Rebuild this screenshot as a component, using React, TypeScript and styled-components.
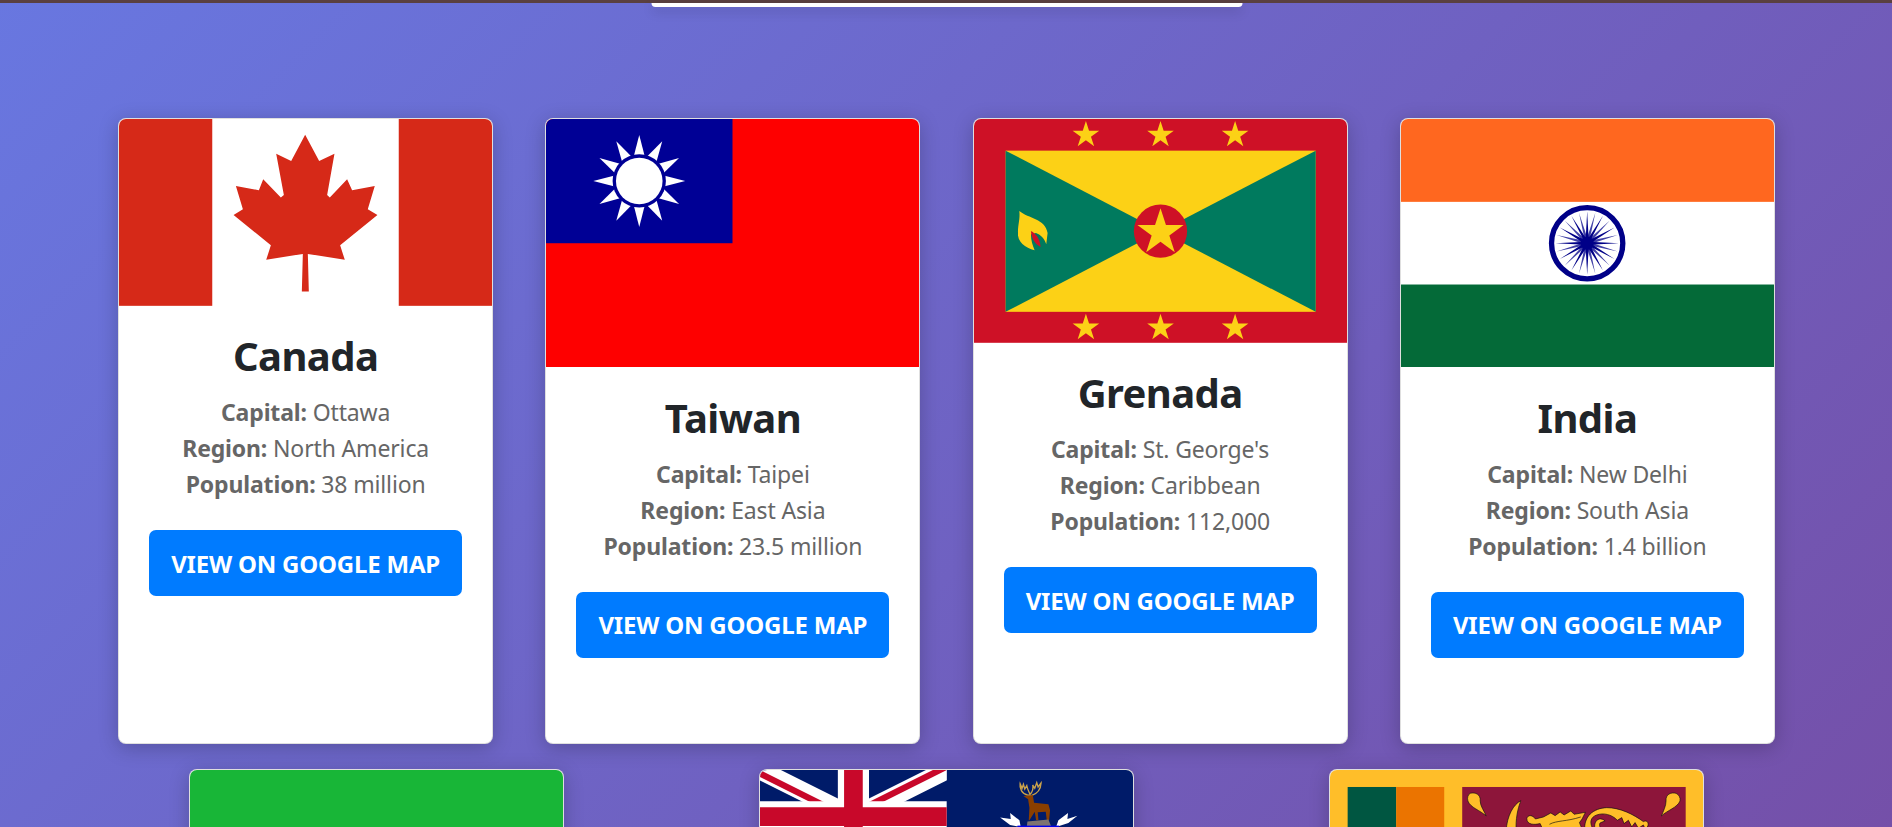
import React from 'react';
import styled, { createGlobalStyle } from 'styled-components';

const GlobalStyle = createGlobalStyle`
    html, body {
        margin: 0;
        height: 827px;
        overflow: hidden;
    }
    body {
        font-family: "Noto Sans", "Open Sans", sans-serif;
        background: linear-gradient(135deg, #667eea -18%, #764ba2 112%);
    }
`;

const Page = styled.div`
    height: 827px;
    overflow: hidden;
`;

const TopStrip = styled.div`
    height: 3px;
    background: #5a4040;
`;

const SearchClip = styled.div`
    width: 591px;
    height: 4px;
    margin: 0 auto;
    background: #fff;
    border-radius: 0 0 9px 9px;
    box-shadow: 0 4px 12px rgba(0, 0, 0, 0.2);
    transform: translateX(0.5px);
`;

const CardGrid = styled.div`
    display: flex;
    flex-wrap: wrap;
    justify-content: space-around;
    row-gap: 25px;
    padding: 111px 91px 0 92px;
`;

const Card = styled.article`
    width: 375px;
    box-sizing: border-box;
    background: #fff;
    border: 1px solid rgba(0, 0, 0, 0.125);
    border-radius: 8px;
    overflow: hidden;
    box-shadow: 0 4px 20px rgba(0, 0, 0, 0.22);
`;

const FlagSvg = styled.svg`
    display: block;
    width: 100%;
    height: auto;
`;

const CardBody = styled.div`
    padding: 26.5px 30px 85.5px;
    text-align: center;
`;

const Title = styled.h2`
    margin: 0 0 14px;
    font-size: 40px;
    line-height: 48px;
    font-weight: 700;
    color: #212529;
    letter-spacing: -0.6px;
`;

const Fact = styled.p`
    margin: 0;
    font-size: 23px;
    line-height: 36px;
    color: #666;
    letter-spacing: -0.15px;

    strong {
        font-weight: 700;
    }
`;

const MapButton = styled.button`
    display: block;
    width: 100%;
    height: 66px;
    margin-top: 28px;
    padding: 0;
    border: 0;
    border-radius: 7px;
    background: #007bff;
    color: #fff;
    font-family: inherit;
    font-size: 24px;
    font-weight: 700;
    letter-spacing: -0.2px;
    text-transform: uppercase;
`;

const star = (cx: number, cy: number, r: number) =>
    Array.from({ length: 10 }, (_, i) => {
        const radius = i % 2 === 0 ? r : r * 0.382;
        const angle = (Math.PI / 5) * i - Math.PI / 2;
        return `${cx + radius * Math.cos(angle)},${cy + radius * Math.sin(angle)}`;
    }).join(' ');

const CanadaFlag = () => (
    <FlagSvg viewBox="57 57 1120 561">
        <rect x="57" y="57" width="1120" height="561" fill="#fff" />
        <rect x="57" y="57" width="280" height="561" fill="#d62918" />
        <rect x="897" y="57" width="280" height="561" fill="#d62918" />
        <polygon
            fill="#d62918"
            points="616,104 658,183 704,161 682,285 690,293 742,238 757,271 825,258 804,328 833,345 721,436 735,480 624,462 627,575 606,575 609,462 499,480 513,436 401,345 429,328 408,258 477,271 490,238 543,293 552,285 529,161 574,183"
        />
    </FlagSvg>
);

const TaiwanFlag = () => (
    <FlagSvg viewBox="18 57 1120 746">
        <rect x="18" y="57" width="1120" height="746" fill="#fe0000" />
        <rect x="18" y="57" width="560" height="373" fill="#000095" />
        {Array.from({ length: 12 }, (_, i) => (
            <polygon
                key={i}
                fill="#fff"
                points="298,105 316,175 280,175"
                transform={`rotate(${i * 30} 298 243)`}
            />
        ))}
        <circle cx="298" cy="243" r="80" fill="#000095" />
        <circle cx="298" cy="243" r="70" fill="#fff" />
    </FlagSvg>
);

const GrenadaFlag = () => (
    <FlagSvg viewBox="26 26 1120 672">
        <rect x="26" y="26" width="1120" height="672" fill="#ce1126" />
        <rect x="121" y="121" width="931" height="484" fill="#fcd116" />
        <polygon points="121,121 586,363 121,605" fill="#007a5e" />
        <polygon points="1052,121 586,363 1052,605" fill="#007a5e" />
        <circle cx="586" cy="363" r="80" fill="#ce1126" />
        <polygon points={star(586, 367, 73)} fill="#fcd116" />
        {[362, 586, 810].map(x => (
            <React.Fragment key={x}>
                <polygon points={star(x, 74, 42)} fill="#fcd116" />
                <polygon points={star(x, 653, 42)} fill="#fcd116" />
            </React.Fragment>
        ))}
        <path
            d="M162 302 C190 325 240 325 247 368 L243 402 C238 385 225 372 212 368 L197 372 C197 392 202 405 208 420 C180 412 155 395 158 365 C158 342 165 325 162 302 Z"
            fill="#fcd116"
        />
        <path d="M197 362 C212 370 224 385 226 410 C210 402 198 385 197 362 Z" fill="#ce1126" />
    </FlagSvg>
);

const IndiaFlag = () => (
    <FlagSvg viewBox="33 26 1120 746">
        <rect x="33" y="26" width="1120" height="249" fill="#ff671f" />
        <rect x="33" y="275" width="1120" height="248" fill="#fff" />
        <rect x="33" y="523" width="1120" height="249" fill="#046a38" />
        <circle cx="592" cy="399" r="107" fill="none" stroke="#000088" strokeWidth="16" />
        {Array.from({ length: 24 }, (_, i) => (
            <polygon
                key={i}
                fill="#000088"
                opacity={i % 2 === 0 ? 1 : 0.75}
                points="592,304 596,378 592,399 588,378"
                transform={`rotate(${i * 15} 592 399)`}
            />
        ))}
        <circle cx="592" cy="399" r="20" fill="#000088" />
    </FlagSvg>
);

const GreenFlag = () => (
    <FlagSvg viewBox="0 0 1120 560">
        <rect width="1120" height="560" fill="#18b637" />
    </FlagSvg>
);

const EnsignFlag = () => (
    <FlagSvg viewBox="59 57 1120 560">
        <rect x="59" y="57" width="1120" height="560" fill="#001b69" />
        <g transform="translate(59 57) scale(9.35)">
            <clipPath id="ensign-canton">
                <rect width="60" height="30" />
            </clipPath>
            <clipPath id="ensign-saltire">
                <path d="M30 15H60V30ZV30H0ZH0V0ZV0H60Z" />
            </clipPath>
            <g clipPath="url(#ensign-canton)">
                <path d="M0 0L60 30M60 0L0 30" stroke="#fff" strokeWidth="6" />
                <path d="M0 0L60 30M60 0L0 30" stroke="#c8082a" strokeWidth="4" clipPath="url(#ensign-saltire)" />
                <path d="M30 0V30M0 15H60" stroke="#fff" strokeWidth="10" />
                <path d="M30 0V30M0 15H60" stroke="#c8082a" strokeWidth="6" />
            </g>
        </g>
        <path
            d="M862 132 C845 128 838 112 840 98 L846 112 L850 100 L854 114 L860 104 C862 115 866 122 870 130 C878 122 880 112 878 102 L884 112 L890 95 L894 108 L903 96 C902 115 892 128 874 134 Z"
            fill="none"
            stroke="#c9a24b"
            strokeWidth="4"
        />
        <path
            d="M850 135 L878 132 L882 155 L925 160 L930 178 L927 208 L920 208 L917 182 L893 184 L895 208 L888 208 L884 182 L868 208 L866 208 L868 170 L864 145 Z"
            fill="#8a3f00"
        />
        <polygon points="862,212 925,206 934,228 860,228" fill="#7d7470" />
        <path d="M780 200 L812 204 L810 186 L838 208 L842 228 L810 222 Z" fill="#fff" />
        <path d="M1012 194 L982 204 L984 186 L955 208 L948 228 L985 216 Z" fill="#fff" />
        <rect x="832" y="224" width="125" height="10" fill="#0000ee" />
    </FlagSvg>
);

const SriLankaFlag = () => (
    <FlagSvg viewBox="59 57 1120 560">
        <rect x="59" y="57" width="1120" height="560" fill="#ffbe29" />
        <rect x="112" y="108" width="146" height="460" fill="#005641" />
        <rect x="258" y="108" width="144" height="460" fill="#eb7400" />
        <rect x="456" y="108" width="671" height="460" fill="#8d153a" />
        <g fill="#ffbe29" stroke="#111" strokeWidth="2">
            <path d="M480 127 C495 123 512 130 510 150 C510 165 522 180 528 195 C510 178 480 170 473 150 C470 140 474 130 480 127 Z" />
            <path d="M1098 127 C1083 123 1066 130 1068 150 C1068 165 1060 180 1054 195 C1072 178 1102 170 1110 150 C1112 140 1106 130 1098 127 Z" />
            <path d="M632 149 C610 160 590 195 588 240 L618 240 C616 205 622 175 632 149 Z" />
            <path d="M650 203 C652 190 668 192 676 204 L700 198 L722 186 L735 194 L750 183 L762 192 L782 180 L792 190 L826 184 L816 204 L808 215 L818 240 L700 240 L690 218 C672 222 650 222 650 203 Z" />
            <path d="M824 240 C820 195 850 172 890 170 C930 170 970 190 1000 212 C1012 205 1018 218 1012 228 L1005 234 L1000 222 L985 232 L975 215 L965 228 L955 208 L942 218 L935 200 L922 208 C905 190 880 185 860 192 C842 198 835 215 852 240 Z" />
            <path d="M856 240 C846 208 870 195 885 210 L872 215 C866 218 868 226 874 240 Z" />
        </g>
        <path d="M718 220 C740 208 770 212 812 198" fill="none" stroke="#111" strokeWidth="2" />
    </FlagSvg>
);

type Country = {
    name: string;
    capital: string;
    region: string;
    population: string;
    Flag: React.ComponentType;
};

const countries: Country[] = [
    { name: 'Canada', capital: 'Ottawa', region: 'North America', population: '38 million', Flag: CanadaFlag },
    { name: 'Taiwan', capital: 'Taipei', region: 'East Asia', population: '23.5 million', Flag: TaiwanFlag },
    { name: 'Grenada', capital: "St. George's", region: 'Caribbean', population: '112,000', Flag: GrenadaFlag },
    { name: 'India', capital: 'New Delhi', region: 'South Asia', population: '1.4 billion', Flag: IndiaFlag },
];

const nextFlags = [GreenFlag, EnsignFlag, SriLankaFlag];

const App = () => (
    <Page>
        <GlobalStyle />
        <TopStrip />
        <SearchClip />
        <CardGrid>
            {countries.map(({ name, capital, region, population, Flag }) => (
                <Card key={name}>
                    <Flag />
                    <CardBody>
                        <Title>{name}</Title>
                        <Fact>
                            <strong>Capital:</strong> {capital}
                        </Fact>
                        <Fact>
                            <strong>Region:</strong> {region}
                        </Fact>
                        <Fact>
                            <strong>Population:</strong> {population}
                        </Fact>
                        <MapButton>View on Google Map</MapButton>
                    </CardBody>
                </Card>
            ))}
            {nextFlags.map((Flag, i) => (
                <Card key={i}>
                    <Flag />
                </Card>
            ))}
        </CardGrid>
    </Page>
);

export default App;
